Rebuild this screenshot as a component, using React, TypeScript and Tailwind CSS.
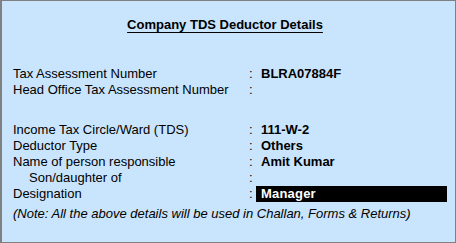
const rows = [
  { label: "Tax Assessment Number", value: "BLRA07884F" },
  { label: "Head Office Tax Assessment Number", value: "" },
  { label: "Income Tax Circle/Ward (TDS)", value: "111-W-2", gap: true },
  { label: "Deductor Type", value: "Others" },
  { label: "Name of person responsible", value: "Amit Kumar" },
  { label: "Son/daughter of", value: "", indent: true },
  { label: "Designation", value: "Manager", active: true },
];

export default function App() {
  return (
    <div className="h-[243px] w-[456px] border-t border-r border-b border-l-2 border-[#808080] bg-[#c9e5fd] pt-[16px] font-['Liberation_Sans',Arial,sans-serif] text-[13px] leading-[16px] text-black">
      <div className="flex justify-center pr-[7px]">
        <span className="font-bold underline underline-offset-[3px]">
          Company TDS Deductor Details
        </span>
      </div>

      <div className="mt-[33px] pl-[11px]">
        {rows.map((row) => (
          <div
            key={row.label}
            className={`flex h-[16px] items-center ${row.gap ? "mt-[24px]" : ""}`}
          >
            <div className={`w-[236px] ${row.indent ? "pl-[16px]" : ""}`}>{row.label}</div>
            <div className="w-[7px]">:</div>
            <div
              className={`h-[16px] w-[191px] pl-[5px] font-bold ${
                row.active ? "bg-black text-white tracking-[0.2px]" : ""
              }`}
            >
              {row.value}
            </div>
          </div>
        ))}

        <div className="mt-[4px] italic">
          (Note: All the above details will be used in Challan, Forms &amp; Returns)
        </div>
      </div>
    </div>
  );
}
